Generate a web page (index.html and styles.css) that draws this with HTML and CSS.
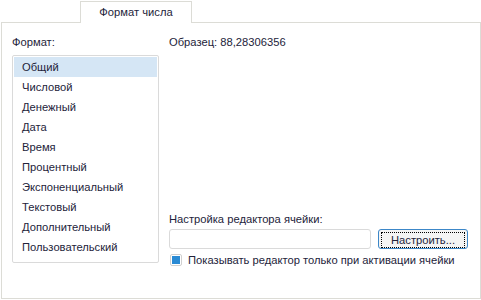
FILE: index.html
```html
<!DOCTYPE html>
<html lang="ru">
<head>
    <meta charset="UTF-8">
    <title>Формат числа</title>
    <link rel="stylesheet" href="styles.css">
</head>
<body>
    <div class="tabs">
        <div class="tab">Формат числа</div>
    </div>
    <div class="panel">
        <div class="left-col">
            <div class="label">Формат:</div>
            <ul class="format-list">
                <li class="selected">Общий</li>
                <li>Числовой</li>
                <li>Денежный</li>
                <li>Дата</li>
                <li>Время</li>
                <li>Процентный</li>
                <li>Экспоненциальный</li>
                <li>Текстовый</li>
                <li>Дополнительный</li>
                <li>Пользовательский</li>
            </ul>
        </div>
        <div class="right-col">
            <div class="label">Образец: 88,28306356</div>
            <div class="editor">
                <div class="label">Настройка редактора ячейки:</div>
                <div class="editor-row">
                    <div class="text-input"></div>
                    <button class="btn"><span>Настроить...</span></button>
                </div>
                <label class="check">
                    <span class="box"><span class="mark"></span></span>
                    Показывать редактор только при активации ячейки
                </label>
            </div>
        </div>
    </div>
</body>
</html>
```

FILE: styles.css
```css
body {
    margin: 0;
    width: 481px;
    height: 300px;
    background: #ffffff;
    font-family: "Liberation Sans", Arial, sans-serif;
    font-size: 11.2px;
    color: #23233a;
    overflow: hidden;
}
.tabs {
    display: flex;
    padding-left: 80px;
    padding-top: 1px;
}
.tab {
    width: 110px;
    height: 21px;
    line-height: 21px;
    text-align: center;
    border: 1px solid #dcdcd6;
    border-bottom: none;
    background: #ffffff;
    margin-bottom: -1px;
    position: relative;
    z-index: 1;
}
.panel {
    display: flex;
    margin-left: 1px;
    width: 478px;
    height: 275px;
    border: 1px solid #dcdcd6;
}
.left-col {
    width: 147px;
    padding-left: 10px;
    padding-top: 13px;
}
.label {
    height: 13px;
    line-height: 13px;
    white-space: nowrap;
}
.format-list {
    list-style: none;
    margin: 6px 0 0 0;
    padding: 1px;
    height: 204px;
    border: 1px solid #dadada;
    border-radius: 2px;
}
.format-list li {
    height: 20px;
    line-height: 21px;
    padding-left: 8px;
}
.format-list li.selected {
    background: #d5e6f5;
}
.right-col {
    flex: 1;
    display: flex;
    flex-direction: column;
    padding-left: 10px;
    padding-top: 13px;
}
.editor {
    margin-top: 164px;
}
.editor-row {
    display: flex;
    gap: 7px;
    margin-top: 3px;
}
.text-input {
    width: 200px;
    height: 18px;
    border: 1px solid #dadada;
    border-radius: 3px;
}
.btn {
    width: 90px;
    height: 20px;
    padding: 2px;
    border: 1px solid #3c87c8;
    border-radius: 3px;
    background: #f4f4f4;
    font: inherit;
    color: inherit;
}
.btn span {
    display: block;
    height: 14px;
    line-height: 14px;
    border: 1px dotted #000000;
}
.check {
    display: flex;
    align-items: center;
    gap: 6px;
    margin-top: 5px;
    margin-left: 1px;
    white-space: nowrap;
}
.box {
    width: 10px;
    height: 10px;
    border: 1px solid #d0d0d0;
    border-radius: 2px;
    display: flex;
    align-items: center;
    justify-content: center;
}
.mark {
    width: 8px;
    height: 8px;
    background: #2a8ad4;
}
```
